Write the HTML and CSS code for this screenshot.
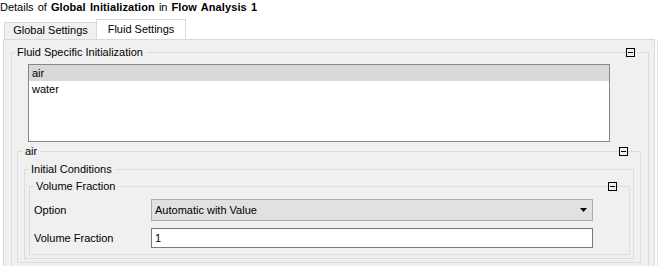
FILE: index.html
```html
<!DOCTYPE html>
<html>
<head>
<meta charset="utf-8">
<title>Details of Global Initialization</title>
<link rel="stylesheet" href="styles.css">
</head>
<body>
<div class="title">Details of <b>Global Initialization</b> in <b>Flow Analysis 1</b></div>
<div class="tabs">
  <div class="tab">Global Settings</div>
  <div class="tab active">Fluid Settings</div>
</div>
<div class="frame">
<div class="panel">
  <fieldset class="group g-fluid">
    <legend>Fluid Specific Initialization</legend>
    <span class="collapse c-fluid"></span>
    <ul class="list">
      <li class="sel">air</li>
      <li>water</li>
    </ul>
    <fieldset class="group g-air">
      <legend>air</legend>
      <span class="collapse c-air"></span>
      <fieldset class="group g-ic">
        <legend>Initial Conditions</legend>
        <fieldset class="group g-vf">
          <legend>Volume Fraction</legend>
          <span class="collapse c-vf"></span>
          <div class="row">
            <span class="label">Option</span>
            <div class="select"><span>Automatic with Value</span><svg class="arrow" width="7" height="4" viewBox="0 0 7 4"><path d="M0 0H7L3.5 4Z" fill="#000"/></svg></div>
          </div>
          <div class="row row2">
            <span class="label">Volume Fraction</span>
            <div class="input">1</div>
          </div>
        </fieldset>
      </fieldset>
    </fieldset>
  </fieldset>
</div>
</div>
</body>
</html>
```

FILE: styles.css
```css
html, body {
  margin: 0;
  padding: 0;
  overflow: hidden;
}
body {
  height: 266px;
  background: #fff;
  color: #000;
  font-family: "Liberation Sans", Arial, sans-serif;
  font-size: 11px;
  line-height: 14px;
}
.title {
  height: 19px;
  white-space: nowrap;
  word-spacing: 1px;
}
.title b {
  letter-spacing: 0.1px;
}
.tabs {
  display: flex;
  align-items: flex-end;
  height: 20px;
  margin-left: 4px;
}
.tab {
  box-sizing: border-box;
  width: 93px;
  height: 17px;
  margin-right: -1px;
  border: 1px solid #d9d9d9;
  border-bottom: none;
  background: #f0f0f0;
  text-align: center;
  white-space: nowrap;
}
.tab.active {
  position: relative;
  width: 90px;
  height: 20px;
  margin-right: 0;
  padding-top: 2px;
  background: #fff;
}
.frame {
  box-sizing: border-box;
  width: 658px;
  height: 227px;
  border-right: 1px solid #e3e3e3;
  padding-left: 3px;
}
.panel {
  box-sizing: border-box;
  width: 652px;
  height: 227px;
  overflow: hidden;
  border: 1px solid #d9d9d9;
  border-bottom: none;
  background: #f0f0f0;
  padding: 6px 5px 0 7px;
}
.group {
  position: relative;
  margin: 0;
  min-width: 0;
  border: 1px solid #dcdcdc;
  padding: 0;
}
.group > legend {
  padding: 0 3px 0 2px;
  line-height: 13px;
  white-space: nowrap;
}
.g-fluid {
  padding: 0 7px 6px 5px;
}
.g-fluid > legend {
  margin-left: -2px;
}
.list {
  box-sizing: border-box;
  list-style: none;
  margin: 5px 0 0 11px;
  padding: 0;
  width: 582px;
  height: 78px;
  border: 1px solid #828790;
  background: #fff;
}
.list li {
  height: 16px;
  line-height: 16px;
  padding-left: 3px;
}
.list li.sel {
  background: #d9d9d9;
}
.g-air {
  margin-top: 3px;
  padding: 0 6px 3px 6px;
}
.g-air > legend {
  margin-left: -1px;
}
.g-ic {
  margin-top: 5px;
  padding: 0 3px 3px 4px;
}
.g-vf {
  margin-top: 4px;
  padding: 0 36px 6px 4px;
}
.collapse {
  position: absolute;
  top: -11px;
  width: 9px;
  height: 9px;
  box-sizing: border-box;
  border: 1px solid #000;
  background: #f0f0f0;
}
.collapse::after {
  content: "";
  position: absolute;
  left: 1px;
  right: 1px;
  top: 3px;
  height: 1px;
  background: #000;
}
.c-fluid { right: 13px; }
.c-air { right: 12px; }
.c-vf { right: 12px; }
.row {
  display: flex;
  align-items: center;
  margin-top: 6px;
}
.row2 {
  margin-top: 7px;
}
.label {
  width: 117px;
  flex: none;
  white-space: nowrap;
}
.select {
  box-sizing: border-box;
  width: 442px;
  height: 22px;
  border: 1px solid #adadad;
  background: #e1e1e1;
  padding: 0 5px 0 3px;
  display: flex;
  align-items: center;
  justify-content: space-between;
}
.arrow {
  display: block;
}
.input {
  box-sizing: border-box;
  width: 442px;
  height: 20px;
  border: 1px solid #7a7a7a;
  background: #fff;
  padding-left: 3px;
  line-height: 18px;
}
```
